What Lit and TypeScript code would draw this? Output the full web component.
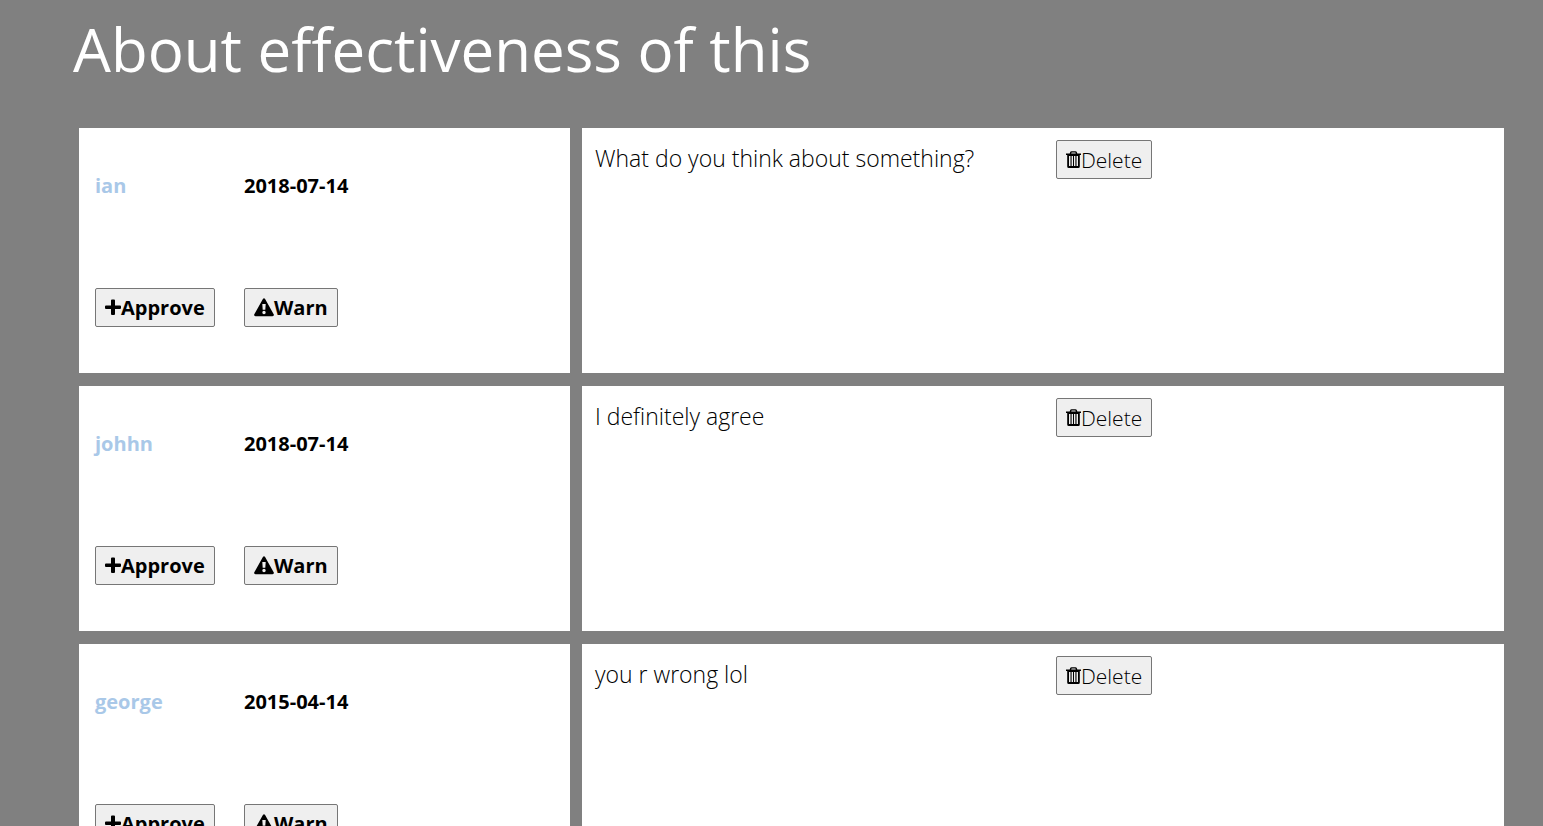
import { LitElement, html, css, svg } from "lit";
import { customElement } from "lit/decorators.js";

interface Post {
  author: string;
  date: string;
  text: string;
}

const posts: Post[] = [
  { author: "ian", date: "2018-07-14", text: "What do you think about something?" },
  { author: "johhn", date: "2018-07-14", text: "I definitely agree" },
  { author: "george", date: "2015-04-14", text: "you r wrong lol" },
];

const icon = (width: number, body: unknown) => html`
  <svg class="icon" viewBox="0 0 ${width} 20" width=${width} height="20" aria-hidden="true">${body}</svg>`;

const plus = icon(16, svg`<path d="M7 1.500h2a1 1 0 0 1 1 1v5h5a1 1 0 0 1 1 1v1.500a1 1 0 0 1-1 1h-5v5a1 1 0 0 1-1 1H7a1 1 0 0 1-1-1v-5H1a1 1 0 0 1-1-1V8.500a1 1 0 0 1 1-1h5V2.500a1 1 0 0 1 1-1z"/>`);
const warning = icon(20, svg`<path fill-rule="evenodd" d="M8.900 .9Q10 -.5 11.100 .9L19.800 16.400Q20.300 18 18.500 18.200H1.500Q-.3 18 .2 16.400zM8.300 6l.4 5.800h2.600l.4-5.800zM10 12.800a1.700 1.700 0 1 0 0 3.400a1.700 1.700 0 1 0 0-3.400z"/>`);
const trash = icon(15, svg`<path fill-rule="evenodd" d="M5.500 1.200h4Q10.500 1.200 10.900 2.200L11.300 3.500H15V5H13.800V16.500Q13.800 18 12.300 18H2.700Q1.200 18 1.200 16.500V5H0V3.500H3.700L4.100 2.200Q4.500 1.200 5.500 1.200zM5.600 2.400L5.200 3.500h4.600L9.400 2.400zM3 6v10h1.500V6zM5.600 6v10H7V6zM8 6v10h1.400V6zM10.500 6v10H12V6z"/>`);

@customElement("app-root")
export class AppRoot extends LitElement {
  static styles = css`
    :host {
      display: block;
      height: 100vh;
      overflow: hidden;
      background: #808080;
      font-family: "Open Sans", sans-serif;
      color: #000;
    }
    h1 {
      margin: 0 0 30px 73px;
      font-size: 60px;
      font-weight: 400;
      line-height: 98px;
      color: #fff;
    }
    .posts {
      display: grid;
      gap: 13px;
      margin: 0 39px 0 79px;
    }
    .post {
      display: grid;
      grid-template-columns: 491fr 922fr;
      gap: 12px;
      min-height: 245px;
    }
    .meta,
    .body {
      background: #fff;
    }
    .meta {
      display: grid;
      grid-template-columns: 119px 1fr;
      grid-template-rows: 122px 1fr;
      column-gap: 30px;
      align-items: start;
      justify-items: start;
      padding: 38px 16px 0;
      font-size: 20px;
      font-weight: 700;
      line-height: 40px;
    }
    .author {
      color: #a9c8e8;
      text-decoration: none;
    }
    .body {
      display: grid;
      grid-template-columns: 1fr 1fr;
      align-items: start;
      justify-items: start;
      padding: 12px 0 0 13px;
      column-gap: 13px;
      font-size: 21px;
      font-weight: 300;
    }
    p {
      margin: 0;
      font-size: 23px;
      line-height: 36px;
    }
    button {
      display: flex;
      align-items: center;
      box-sizing: border-box;
      height: 39px;
      padding: 0 9px;
      border: 1px solid #767676;
      border-radius: 2px;
      background: #efefef;
      font: inherit;
      color: #000;
    }
    .icon {
      flex: none;
      fill: currentColor;
    }
  `;

  render() {
    return html`
      <main>
        <h1>About effectiveness of this</h1>
        <div class="posts">
          ${posts.map(
            (post) => html`
              <article class="post">
                <div class="meta">
                  <a class="author" href="#">${post.author}</a>
                  <time datetime=${post.date}>${post.date}</time>
                  <button type="button">${plus}Approve</button>
                  <button type="button">${warning}Warn</button>
                </div>
                <div class="body">
                  <p>${post.text}</p>
                  <button type="button">${trash}Delete</button>
                </div>
              </article>
            `,
          )}
        </div>
      </main>
    `;
  }
}
